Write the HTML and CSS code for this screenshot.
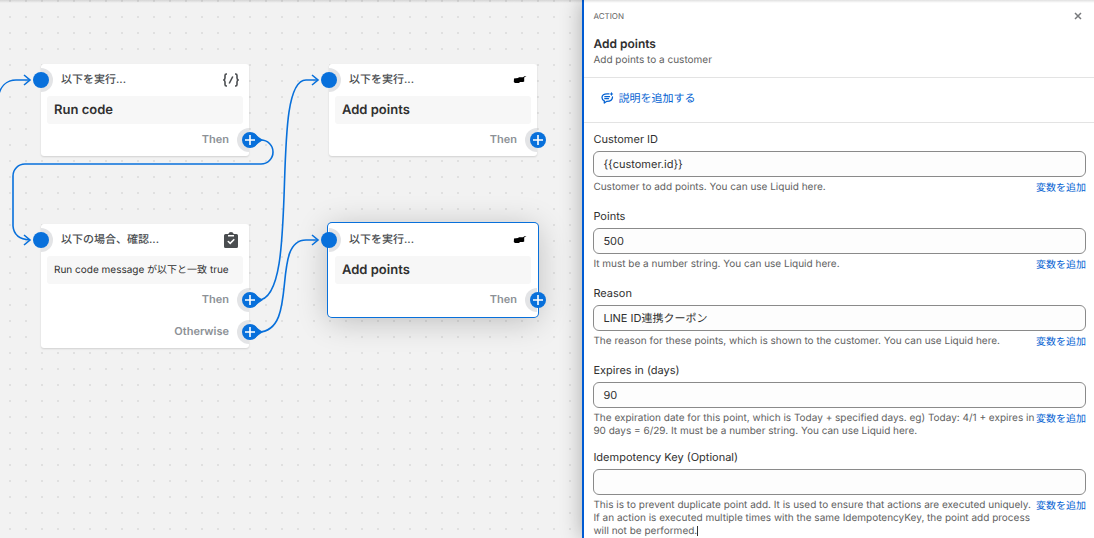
FILE: index.html
```
<!DOCTYPE html>
<html lang="ja">
<head>
    <meta charset="UTF-8">
    <meta name="viewport" content="width=device-width, initial-scale=1.0">
    <title>Flow - Add points</title>
    <link rel="stylesheet" href="styles.css">
</head>
<body>

    <div class="editor">
        <main class="canvas">
            <!-- Run code -->
            <section class="node node-run">
                <header class="node-header">
                    <span>以下を実行...</span>
                    <svg class="node-icon" viewBox="0 0 18 18" fill="none" stroke="#4a4d50" stroke-width="1.6">
                        <path d="M5 3H4.400Q3 3 3 4.600V7Q3 8.800 1.300 9Q3 9.200 3 11V13.400Q3 15 4.400 15H5M13 3H13.600Q15 3 15 4.600V7Q15 8.800 16.700 9Q15 9.200 15 11V13.400Q15 15 13.600 15H13M10.800 5.500L7.200 12.500"/>
                    </svg>
                </header>
                <h2 class="node-body">Run code</h2>
                <div class="branch">Then</div>
            </section>

            <!-- Condition -->
            <section class="node node-check">
                <header class="node-header">
                    <span>以下の場合、確認...</span>
                    <svg class="node-icon" viewBox="0 0 18 18">
                        <path fill="#4a4d50" d="M3.500 3H6.300Q6.800 1 9 1T11.700 3H14.500Q16 3 16 4.500V15.500Q16 17 14.500 17H3.500Q2 17 2 15.500V4.500Q2 3 3.500 3Z"/>
                        <path fill="#fff" d="M6 4H12V5.500H6Z"/>
                        <path fill="none" stroke="#fff" stroke-width="1.600" stroke-linecap="round" d="M6.300 10.500L8.200 12.300L11.800 8.700"/>
                    </svg>
                </header>
                <p class="node-body">Run code message が以下と一致 true</p>
                <div class="branch">Then</div>
                <div class="branch">Otherwise</div>
            </section>

            <!-- Add points -->
            <section class="node node-add">
                <header class="node-header">
                    <span>以下を実行...</span>
                    <svg class="node-icon" viewBox="0 0 18 18">
                        <path d="M4 7.500L8 7L9 6.200H13L14.500 5.200L16.500 5L14.200 6.500V10.500L13 11H10L9 12H5L3.800 11Z"/>
                    </svg>
                </header>
                <h2 class="node-body">Add points</h2>
                <div class="branch">Then</div>
            </section>

            <!-- Add points, selected -->
            <section class="node node-selected">
                <header class="node-header">
                    <span>以下を実行...</span>
                    <svg class="node-icon" viewBox="0 0 18 18">
                        <path d="M4 7.500L8 7L9 6.200H13L14.500 5.200L16.500 5L14.200 6.500V10.500L13 11H10L9 12H5L3.800 11Z"/>
                    </svg>
                </header>
                <h2 class="node-body">Add points</h2>
                <div class="branch">Then</div>
            </section>

            <!-- Connections and ports -->
            <svg class="wires" aria-hidden="true">
                <defs>
                    <path id="arrow" d="M-6 -5L0 0L-6 5"/>
                    <g id="plus">
                        <circle r="8" fill="#0870db"/>
                        <path d="M-5 0H5M0 -5V5" fill="none" stroke="#fff" stroke-width="1.600"/>
                    </g>
                    <path id="tail" d="M4 -7Q8 -3 13 0Q8 3 4 7Z" fill="#0870db"/>
                </defs>
                <g fill="none" stroke="#0870db" stroke-width="1.600">
                    <path d="M-2 98C0 86 7 80 16 80H30"/>
                    <path d="M258 140H261A12 12 0 0 1 261 164H25A12 12 0 0 0 13 176V226Q14 239 30 240"/>
                    <path d="M258 300C302 300 268 80 306 80H318"/>
                    <path d="M258 332C300 332 270 240 306 240H318"/>
                    <use href="#arrow" x="30" y="80"/>
                    <use href="#arrow" x="30" y="240"/>
                    <use href="#arrow" x="318" y="80"/>
                    <use href="#arrow" x="318" y="240"/>
                </g>
                <g fill="#e3e4e6">
                    <path d="M41 68A12 12 0 0 1 41 92Z"/>
                    <path d="M41 228A12 12 0 0 1 41 252Z"/>
                    <path d="M329 68A12 12 0 0 1 329 92Z"/>
                    <path d="M329 228A12 12 0 0 1 329 252Z"/>
                    <path d="M249 128A12 12 0 0 0 249 152Z"/>
                    <path d="M249 288A12 12 0 0 0 249 312Z"/>
                    <path d="M249 320A12 12 0 0 0 249 344Z"/>
                    <path d="M537 128A12 12 0 0 0 537 152Z"/>
                    <path d="M537 288A12 12 0 0 0 537 312Z"/>
                </g>
                <g fill="#0870db">
                    <circle cx="41" cy="80" r="8"/>
                    <circle cx="41" cy="240" r="8"/>
                    <circle cx="329" cy="80" r="8"/>
                    <circle cx="329" cy="240" r="8"/>
                </g>
                <use href="#tail" x="250" y="140"/>
                <use href="#tail" x="250" y="300"/>
                <use href="#tail" x="250" y="332"/>
                <use href="#plus" x="250" y="140"/>
                <use href="#plus" x="250" y="300"/>
                <use href="#plus" x="250" y="332"/>
                <use href="#plus" x="538" y="140"/>
                <use href="#plus" x="538" y="300"/>
            </svg>
        </main>

        <aside class="panel">
            <header class="panel-header">
                <div class="panel-top">
                    <span class="panel-kind">ACTION</span>
                    <button class="close" type="button" aria-label="Close">
                        <svg viewBox="0 0 8 8" fill="none" stroke="#77797c" stroke-width="1.500"><path d="M1 1L7 7M7 1L1 7"/></svg>
                    </button>
                </div>
                <h1>Add points</h1>
                <p>Add points to a customer</p>
            </header>

            <div class="note">
                <button class="note-button" type="button">
                    <svg viewBox="0 0 14 14" fill="none" stroke="#0562d2" stroke-width="1.300" stroke-linecap="round" stroke-linejoin="round">
                        <path d="M9 2.800H7C4 2.800 2 4.300 2 6.500C2 8.300 3 9.300 4.300 9.800V12L6.800 10.300C10.500 10.300 12.500 9 12.500 6M4.800 5.700H9.500M4.800 7.700H8.500"/>
                        <path stroke-width="1" d="M11.500 1.800V4.200M10.300 3H12.700"/>
                    </svg>
                    説明を追加する
                </button>
            </div>

            <form class="fields">
                <div class="field">
                    <label for="customer-id">Customer ID</label>
                    <input id="customer-id" type="text" value="{{customer.id}}">
                    <div class="field-foot">
                        <p>Customer to add points. You can use Liquid here.</p>
                        <a href="#">変数を追加</a>
                    </div>
                </div>
                <div class="field">
                    <label for="points">Points</label>
                    <input id="points" type="text" value="500">
                    <div class="field-foot">
                        <p>It must be a number string. You can use Liquid here.</p>
                        <a href="#">変数を追加</a>
                    </div>
                </div>
                <div class="field">
                    <label for="reason">Reason</label>
                    <input id="reason" type="text" value="LINE ID連携クーポン">
                    <div class="field-foot">
                        <p>The reason for these points, which is shown to the customer. You can use Liquid here.</p>
                        <a href="#">変数を追加</a>
                    </div>
                </div>
                <div class="field">
                    <label for="expires">Expires in (days)</label>
                    <input id="expires" type="text" value="90">
                    <div class="field-foot">
                        <p>The expiration date for this point, which is Today + specified days. eg) Today: 4/1 + expires in 90 days = 6/29. It must be a number string. You can use Liquid here.</p>
                        <a href="#">変数を追加</a>
                    </div>
                </div>
                <div class="field">
                    <label for="idempotency">Idempotency Key (Optional)</label>
                    <input id="idempotency" type="text">
                    <div class="field-foot">
                        <p>This is to prevent duplicate point add. It is used to ensure that actions are executed uniquely. If an action is executed multiple times with the same IdempotencyKey, the point add process will not be performed.<span class="caret"></span></p>
                        <a href="#">変数を追加</a>
                    </div>
                </div>
            </form>
        </aside>
    </div>

</body>
</html>
```

FILE: styles.css
```
* {
    box-sizing: border-box;
}

body {
    margin: 0;
    font-family: Inter, "Noto Sans CJK JP", sans-serif;
    font-size: 11px;
    text-rendering: geometricPrecision;
    color: #303030;
    background-color: #f2f2f2;
}

h1, h2, p {
    margin: 0;
}

button, input {
    font: inherit;
    text-rendering: inherit;
}

button {
    padding: 0;
    border: none;
    background: none;
    cursor: pointer;
}

.editor {
    display: flex;
    height: 100vh;
    overflow: hidden;
    position: relative;
}

/* shadow of the bar above the editor */
.editor::after {
    content: "";
    position: absolute;
    top: 0;
    left: 0;
    right: 0;
    height: 3px;
    background: linear-gradient(rgba(0, 0, 0, 0.12), rgba(0, 0, 0, 0));
}

.canvas {
    flex: 8;
    position: relative;
    overflow: hidden;
    background-color: #f2f2f2;
    background-image: radial-gradient(circle, #e0e0e0 1px, transparent 1px);
    background-size: 16px 16px;
    background-position: 2px 9px;
}

.wires {
    position: absolute;
    top: 0;
    left: 0;
    width: 100%;
    height: 100%;
    pointer-events: none;
}

.node {
    position: absolute;
    width: 208px;
    padding: 0 6px;
    background-color: #fff;
    border-radius: 3px;
    box-shadow: 0 1px 2px rgba(0, 0, 0, 0.14);
}

.node-run {
    left: 41px;
    top: 64px;
}

.node-check {
    left: 41px;
    top: 224px;
}

.node-add {
    left: 329px;
    top: 64px;
}

.node-selected {
    left: 329px;
    top: 224px;
    box-shadow: 0 0 0 1px #fff, 0 0 0 2px #0870db, 0 4px 32px rgba(0, 0, 0, 0.24);
}

.node-header {
    display: flex;
    align-items: center;
    justify-content: space-between;
    height: 32px;
    padding: 0 3px 0 14px;
    color: #4a4d50;
}

.node-header span {
    height: 18px;
    line-height: 16px;
    font-weight: 500;
}

.node-icon {
    width: 18px;
    height: 18px;
}

.node-body {
    height: 28px;
    padding: 0 7px;
    font-size: 10px;
    line-height: 28px;
    border-radius: 3px;
    background-color: #f7f7f7;
    white-space: nowrap;
}

h2.node-body {
    font-size: 13px;
    font-weight: 600;
}

.branch {
    height: 32px;
    padding-right: 14px;
    line-height: 30px;
    text-align: right;
    font-weight: 600;
    color: #8c9196;
}

.panel {
    flex: 7;
    position: relative;
    min-width: 511px;
    background-color: #fff;
    border-left: 2px solid #005bd3;
    box-shadow: 0 0 20px rgba(0, 0, 0, 0.3);
}

.panel-header {
    height: 78px;
    padding: 8px 9px 0;
    border-bottom: 1px solid #e3e3e3;
}

.panel-top {
    display: flex;
    align-items: center;
    justify-content: space-between;
    height: 16px;
    margin-bottom: 12px;
}

.panel-kind {
    font-size: 8px;
    color: #616161;
}

.close {
    display: flex;
    margin-right: 3px;
}

.close svg {
    width: 8px;
    height: 8px;
}

.panel-header h1 {
    font-size: 12px;
    font-weight: 600;
    line-height: 16px;
}

.panel-header p {
    font-size: 10px;
    line-height: 17px;
    color: #616161;
}

.note {
    height: 45px;
    padding: 12px 16px;
    border-bottom: 1px solid #e3e3e3;
}

.note-button {
    display: flex;
    align-items: center;
    gap: 4px;
    line-height: 16px;
    color: #0562d2;
}

.note-button svg {
    width: 14px;
    height: 14px;
}

.fields {
    display: flex;
    flex-direction: column;
    gap: 11px;
    padding: 8px 8px 0 9px;
}

.field label {
    display: block;
    margin-bottom: 4px;
    line-height: 16px;
}

.field input {
    display: block;
    width: 100%;
    height: 26px;
    padding: 0 9px;
    border: 1px solid #8a8a8a;
    border-radius: 6px;
    background-color: #fdfdfd;
    color: #303030;
    outline: none;
}

.field-foot {
    display: flex;
    align-items: flex-start;
    justify-content: space-between;
    min-height: 16px;
    margin-top: 4px;
}

.field-foot p {
    flex: 1;
    font-size: 10px;
    line-height: 13px;
    color: #616161;
}

.field-foot a {
    font-size: 10px;
    line-height: 14px;
    white-space: nowrap;
    text-decoration: none;
    color: #0562d2;
}

.caret {
    display: inline-block;
    height: 10px;
    border-left: 1px solid #303030;
    vertical-align: -2px;
}
```
